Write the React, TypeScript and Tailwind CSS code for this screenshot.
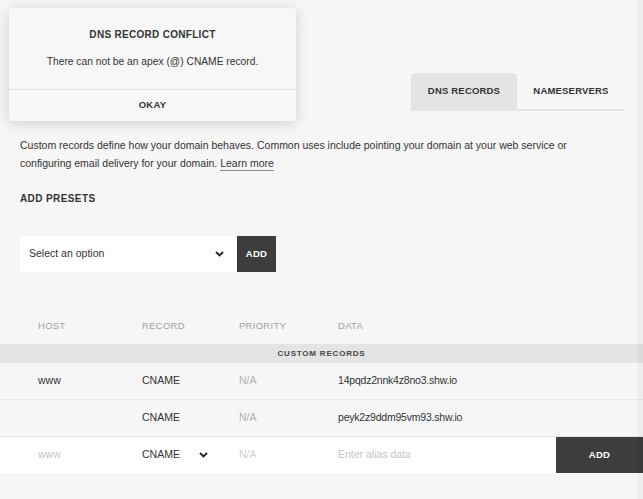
import React from "react";

const Chevron = ({ className = "" }: { className?: string }) => (
  <svg width="9" height="6" viewBox="0 0 9 6" className={className}>
    <polyline points="1,1 4.5,4.5 8,1" fill="none" stroke="#222" strokeWidth="1.8" />
  </svg>
);

export default function App() {
  return (
    <div
      className="relative min-h-[499px] w-full overflow-hidden bg-[#f6f6f6] text-[#2f2f2f]"
      style={{ fontFamily: '"Liberation Sans", Arial, sans-serif' }}
    >
      {/* right scroll shade */}
      <div className="absolute right-0 top-0 h-full w-[5px] bg-black/[0.035]" />

      {/* Tabs */}
      <div className="flex justify-end pt-[73px] pr-[18px]">
        <div className="flex border-b-2 border-[#e4e4e4]">
          <div className="flex h-[36px] w-[106px] items-center justify-center rounded-t-[4px] bg-[#e4e4e4] text-[9.5px] font-bold tracking-[0.02em] text-[#333]">
            DNS RECORDS
          </div>
          <div className="flex h-[36px] w-[108px] items-center justify-center text-[9.5px] font-bold tracking-[0.02em] text-[#333]">
            NAMESERVERS
          </div>
        </div>
      </div>

      {/* Description */}
      <p className="mt-[25px] px-[20px] text-[10.5px] leading-[18px] text-[#333]">
        Custom records define how your domain behaves. Common uses include pointing your domain at your web service or
        <br />
        configuring email delivery for your domain.{" "}
        <span className="border-b border-[#888] pb-[1px]">Learn more</span>
      </p>

      <div className="mt-[18px] px-[20px] text-[10px] font-bold leading-[18px] tracking-[0.04em] text-[#333]">
        ADD PRESETS
      </div>

      <div className="mt-[28px] flex px-[20px]">
        <div className="flex h-[36px] w-[217px] items-center justify-between bg-white pl-[9px] pr-[13px] text-[10.5px] text-[#333]">
          <span>Select an option</span>
          <Chevron />
        </div>
        <div className="flex h-[36px] w-[39px] items-center justify-center bg-[#3d3d3d] text-[9.5px] font-bold tracking-[0.03em] text-white">
          ADD
        </div>
      </div>

      {/* Table header */}
      <div className="mt-[36px] flex h-[36px] items-center text-[9.5px] tracking-[0.03em] text-[#a0a0a0]">
        <div className="w-[142px] pl-[38px]">HOST</div>
        <div className="w-[97px]">RECORD</div>
        <div className="w-[99px]">PRIORITY</div>
        <div>DATA</div>
      </div>

      <div className="flex h-[19px] items-center justify-center bg-[#e4e4e4] text-[8px] font-bold tracking-[0.1em] text-[#444]">
        CUSTOM RECORDS
      </div>

      <div className="flex h-[37px] items-center border-b border-[#e8e8e8] text-[10.5px] text-[#333]">
        <div className="w-[142px] pl-[38px]">www</div>
        <div className="w-[97px]">CNAME</div>
        <div className="w-[99px] text-[#b0b0b0]">N/A</div>
        <div className="tracking-[-0.02em]">14pqdz2nnk4z8no3.shw.io</div>
      </div>

      <div className="flex h-[37px] items-center border-b border-[#e8e8e8] text-[10.5px] text-[#333]">
        <div className="w-[142px] pl-[38px]"></div>
        <div className="w-[97px]">CNAME</div>
        <div className="w-[99px] text-[#b0b0b0]">N/A</div>
        <div className="tracking-[-0.02em]">peyk2z9ddm95vm93.shw.io</div>
      </div>

      <div className="flex h-[36px] items-center bg-white text-[10.5px]">
        <div className="w-[142px] pl-[38px] text-[#c4c4c4]">www</div>
        <div className="flex w-[97px] items-center text-[#333]">
          <span className="w-[57px]">CNAME</span>
          <Chevron />
        </div>
        <div className="w-[99px] text-[#d0d0d0]">N/A</div>
        <div className="flex-1 text-[#c4c4c4]">Enter alias data</div>
        <div className="flex h-[36px] w-[87px] items-center justify-center bg-[#3d3d3d] text-[9.5px] font-bold tracking-[0.03em] text-white">
          ADD
        </div>
      </div>

      {/* Modal */}
      <div className="absolute left-[9px] top-[8px] w-[287px] rounded-[4px] bg-[#f7f7f7] shadow-[0_2px_14px_rgba(0,0,0,0.16)]">
        <div className="flex flex-col items-center pb-[19px] pt-[19px]">
          <div className="text-[10px] font-bold leading-[16px] tracking-[0.03em] text-[#333]">DNS RECORD CONFLICT</div>
          <div className="mt-[11px] text-[10.25px] leading-[16px] text-[#333]">There can not be an apex (@) CNAME record.</div>
        </div>
        <div className="flex h-[32px] items-center justify-center border-t border-[#e2e2e2] text-[9.5px] font-bold tracking-[0.03em] text-[#333]">
          OKAY
        </div>
      </div>
    </div>
  );
}
